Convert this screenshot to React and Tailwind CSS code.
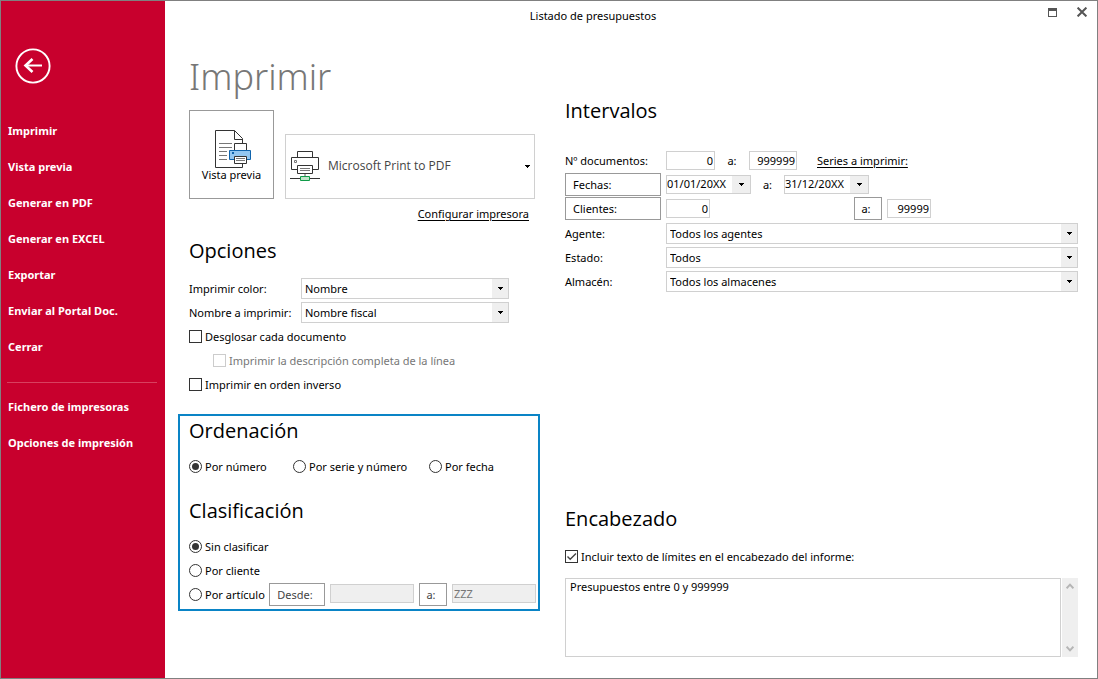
import { useState } from "react";

const menuItems = [
  "Imprimir",
  "Vista previa",
  "Generar en PDF",
  "Generar en EXCEL",
  "Exportar",
  "Enviar al Portal Doc.",
  "Cerrar",
];
const settingsItems = ["Fichero de impresoras", "Opciones de impresión"];

function Caret({ className = "" }) {
  return (
    <svg viewBox="0 0 5 3" className={`h-[3px] w-[5px] ${className}`} shapeRendering="crispEdges" fill="currentColor" aria-hidden="true">
      <path d="M0 0h5v1H4v1H3v1H2V2H1V1H0z" />
    </svg>
  );
}

function BackIcon() {
  return (
    <svg viewBox="0 0 36 36" className="size-9" fill="none" stroke="white" aria-hidden="true">
      <circle cx="18" cy="18" r="16.6" strokeWidth="1.9" />
      <path d="M10.5 17.5H27" strokeWidth="2" />
      <path d="M17.5 11l-7 6.5 7 6.5" strokeWidth="2.6" />
    </svg>
  );
}

function PreviewIcon() {
  return (
    <svg viewBox="0 0 37 38" className="h-[38px] w-[37px]" fill="none" stroke="#333" aria-hidden="true">
      <path d="M.5 .5H19.5L27.5 8.5V37.5H.5Z" fill="white" />
      <path d="M19.5 .5V9.5H27.5" />
      <path d="M4 13.5H17M4 17.5H17M4 21.5H12M4 25.5H12M4 29.5H12" stroke="#777" />
      <path d="M19.5 20.5V13.5H31.5V20.5" fill="white" />
      <path d="M14.5 20.5H35.5V29.5H14.5Z" fill="#92c7f2" stroke="#0f64ad" />
      <path d="M19.5 26.5H31.5V33.5H19.5Z" fill="white" />
      <path d="M21 28.5H30M21 30.5H30" stroke="#777" />
      <path d="M17 22h2v2h-2z" fill="#0f64ad" stroke="none" />
    </svg>
  );
}

function PrinterIcon({ className = "" }) {
  return (
    <svg viewBox="0 0 30 32" className={`h-8 w-[30px] ${className}`} fill="none" stroke="#333" aria-hidden="true">
      <path d="M7.5 7.5V1.5H22.5V7.5" />
      <path d="M7.5 19.5H1.5V7.5H28.5V19.5H22.5" />
      <path d="M4.5 10.5h2v2h-2z" stroke="#777" />
      <path d="M7.5 15.5H22.5V23.5H7.5Z" fill="white" />
      <path d="M10 18.5H20M10 20.5H20" stroke="#777" />
      <path d="M15 24V26" stroke="#aaa" strokeWidth="2" />
      <path d="M0 28.5H30" />
      <path d="M10.5 26.5H19.5V30.5H10.5Z" fill="#bfe3c8" stroke="#109b48" />
    </svg>
  );
}

function Heading({ children }) {
  return <h2 className="font-['Open_Sans','Noto_Sans',sans-serif] text-xl leading-[30px]">{children}</h2>;
}

function Select({ id, options, className = "" }) {
  return (
    <div className={`relative h-[21px] ${className}`}>
      <select id={id} className="block size-full appearance-none border border-[#d0d0d0] bg-white pr-5 pl-[3px] outline-none">
        {options.map((o) => (
          <option key={o}>{o}</option>
        ))}
      </select>
      <span className="pointer-events-none absolute inset-y-px right-px flex w-4 items-center justify-center bg-[#efefef]">
        <Caret />
      </span>
    </div>
  );
}

function DateField({ label, value }) {
  return (
    <div className="flex h-[19px] w-[85px] border border-[#d0d0d0]">
      <input aria-label={label} defaultValue={value} className="w-0 min-w-0 flex-1 pb-px outline-none" />
      <button type="button" aria-label={`Abrir calendario: ${label}`} className="flex w-[18px] items-center justify-center bg-[#efefef]">
        <Caret />
      </button>
    </div>
  );
}

function NumberField({ id, label, value, className }) {
  return (
    <input
      id={id}
      aria-label={label}
      defaultValue={value}
      inputMode="numeric"
      className={`h-[19px] border border-[#d0d0d0] bg-white pr-px pb-px text-right outline-none ${className}`}
    />
  );
}

function BoxButton({ children, className = "" }) {
  return (
    <button type="button" className={`h-[23px] border border-[#999] bg-white ${className}`}>
      {children}
    </button>
  );
}

function Check({ label, disabled, defaultChecked, className = "" }) {
  return (
    <label className={`flex h-6 items-center gap-[3px] pb-px ${disabled ? "text-[#777]" : ""} ${className}`}>
      <span className="relative size-[13px] shrink-0">
        <input
          type="checkbox"
          disabled={disabled}
          defaultChecked={defaultChecked}
          className="peer block size-full appearance-none border border-[#333] bg-white disabled:border-[#ccc]"
        />
        <svg viewBox="0 0 13 13" className="pointer-events-none absolute inset-0 hidden size-full peer-checked:block" fill="none" stroke="#444" strokeWidth="1.4" aria-hidden="true">
          <path d="M2.5 6.5l2.7 2.7L11 3.5" />
        </svg>
      </span>
      {label}
    </label>
  );
}

function Radio({ name, label, checked, onChange, className = "" }) {
  return (
    <label className={`flex h-6 items-center gap-[3px] pb-px whitespace-nowrap ${className}`}>
      <input
        type="radio"
        name={name}
        checked={checked}
        onChange={onChange}
        className="grid size-[13px] shrink-0 appearance-none place-content-center rounded-full border border-[#333] bg-white before:size-[7px] before:rounded-full before:content-[''] checked:before:bg-[#333]"
      />
      {label}
    </label>
  );
}

function Sidebar() {
  return (
    <nav className="w-[164px] shrink-0 bg-[#c8002d] text-[11px] font-bold text-white">
      <button type="button" aria-label="Volver" className="mt-[47px] ml-3.5 block size-9">
        <BackIcon />
      </button>
      <ul className="mt-[29px] pl-[7px]">
        {menuItems.map((item) => (
          <li key={item} className="flex h-9 items-center">
            <a href="#">{item}</a>
          </li>
        ))}
      </ul>
      <hr className="mt-[17px] mr-2 ml-1.5 border-t border-[#d8405f]" />
      <ul className="mt-1.5 pl-[7px]">
        {settingsItems.map((item) => (
          <li key={item} className="flex h-9 items-center">
            <a href="#">{item}</a>
          </li>
        ))}
      </ul>
    </nav>
  );
}

function TitleBar() {
  return (
    <header className="flex h-[30px] shrink-0">
      <h1 className="flex flex-1 items-center justify-center text-[11px]">Listado de presupuestos</h1>
      <div className="flex w-[76px] items-start gap-5 pt-[6px] pl-[27px] text-[#555]">
        <button type="button" aria-label="Maximizar" className="mt-px">
          <svg viewBox="0 0 9 9" className="size-[9px]" shapeRendering="crispEdges" fill="currentColor" aria-hidden="true">
            <path fillRule="evenodd" d="M0 0h9v9H0zM1 3v5h7V3z" />
          </svg>
        </button>
        <button type="button" aria-label="Cerrar ventana">
          <svg viewBox="0 0 10 10" className="size-[10px]" fill="none" stroke="currentColor" strokeWidth="2" aria-hidden="true">
            <path d="M.6 .6l8.8 8.8M9.4 .6L.6 9.4" />
          </svg>
        </button>
      </div>
    </header>
  );
}

function PrintColumn() {
  const [order, setOrder] = useState("Por número");
  const [group, setGroup] = useState("Sin clasificar");
  return (
    <div className="w-[362px] shrink-0">
      <div className="pl-[11px]">
        <h2 className="mt-[22px] font-['Noto_Sans','Open_Sans',sans-serif] text-4xl leading-[48px] font-light text-[#777]">Imprimir</h2>
        <div className="mt-[9px] flex items-end gap-[11px]">
          <button type="button" className="flex h-[89px] w-[85px] flex-col items-center border border-[#999] pt-[19px]">
            <span className="pl-1">
              <PreviewIcon />
            </span>
            <span className="leading-[14px]">Vista previa</span>
          </button>
          <div className="relative h-[65px] w-[250px]">
            <select aria-label="Impresora" className="block size-full appearance-none border border-[#d0d0d0] bg-white pb-0.5 pl-[42px] font-['Open_Sans','Noto_Sans',sans-serif] text-xs text-[#444] outline-none">
              <option>Microsoft Print to PDF</option>
            </select>
            <PrinterIcon className="pointer-events-none absolute top-4 left-[5px]" />
            <Caret className="pointer-events-none absolute top-[31px] right-[5px]" />
          </div>
        </div>
        <div className="flex h-[30px] items-center justify-end pr-[11px]">
          <a href="#" className="underline underline-offset-2">Configurar impresora</a>
        </div>

        <section className="mt-[7px]">
          <Heading>Opciones</Heading>
          <div className="mt-[11px] flex h-6 items-center pb-px">
            <label htmlFor="color" className="w-28">Imprimir color:</label>
            <Select id="color" options={["Nombre"]} className="w-52" />
          </div>
          <div className="flex h-6 items-center pb-px">
            <label htmlFor="nombre" className="w-28">Nombre a imprimir:</label>
            <Select id="nombre" options={["Nombre fiscal"]} className="w-52" />
          </div>
          <Check label="Desglosar cada documento" />
          <Check label="Imprimir la descripción completa de la línea" disabled className="pl-6" />
          <Check label="Imprimir en orden inverso" />
        </section>
      </div>

      <div className="mt-[17px] border-2 border-[#0a84c6] pr-0.5 pb-0.5 pl-[9px]">
        <section>
          <Heading>Ordenación</Heading>
          <div className="mt-[9px] grid grid-cols-[104px_136px_1fr]">
            {["Por número", "Por serie y número", "Por fecha"].map((o) => (
              <Radio key={o} name="orden" label={o} checked={order === o} onChange={() => setOrder(o)} />
            ))}
          </div>
        </section>
        <section className="mt-[17px]">
          <Heading>Clasificación</Heading>
          <div className="mt-[9px]">
            {["Sin clasificar", "Por cliente"].map((o) => (
              <Radio key={o} name="clasificacion" label={o} checked={group === o} onChange={() => setGroup(o)} />
            ))}
            <div className="flex h-6 items-start gap-[5px]">
              <Radio name="clasificacion" label="Por artículo" checked={group === "Por artículo"} onChange={() => setGroup("Por artículo")} className="w-[75px]" />
              <BoxButton className="w-14 pr-1 text-[#444]">Desde:</BoxButton>
              <input disabled aria-label="Desde artículo" className="mt-px h-[19px] w-[84px] border border-[#d0d0d0] bg-[#efefef]" />
              <BoxButton className="w-7 pr-1 text-[#444]">a:</BoxButton>
              <input disabled aria-label="Hasta artículo" defaultValue="ZZZ" className="mt-px h-[19px] w-[84px] border border-[#d0d0d0] bg-[#efefef] pb-px pl-px text-[#777]" />
            </div>
          </div>
        </section>
      </div>
    </div>
  );
}

function RangeColumn() {
  return (
    <div className="flex min-w-0 flex-1 flex-col">
      <section className="mt-[65px]">
        <Heading>Intervalos</Heading>
        <div className="mt-[23px] flex h-6 items-center pb-px">
          <label htmlFor="doc-desde" className="w-[101px]">Nº documentos:</label>
          <NumberField id="doc-desde" label="Nº documentos desde" value="0" className="w-[49px]" />
          <span className="w-[34px] text-center">a:</span>
          <NumberField label="Nº documentos hasta" value="999999" className="w-12" />
          <a href="#" className="ml-5 underline underline-offset-2">Series a imprimir:</a>
        </div>
        <div className="flex h-6 items-center pb-px">
          <BoxButton className="mr-[5px] w-24 pl-[7px] text-left">Fechas:</BoxButton>
          <DateField label="Fecha desde" value="01/01/20XX" />
          <span className="w-[33px] text-center">a:</span>
          <DateField label="Fecha hasta" value="31/12/20XX" />
        </div>
        <div className="flex h-6 items-center pb-px">
          <BoxButton className="mr-[5px] w-24 pl-[7px] text-left">Clientes:</BoxButton>
          <NumberField label="Cliente desde" value="0" className="w-11" />
          <BoxButton className="mr-[5px] ml-36 w-7 pr-1">a:</BoxButton>
          <NumberField label="Cliente hasta" value="99999" className="w-11" />
        </div>
        {[
          ["agente", "Agente:", "Todos los agentes"],
          ["estado", "Estado:", "Todos"],
          ["almacen", "Almacén:", "Todos los almacenes"],
        ].map(([id, label, value]) => (
          <div key={id} className="flex h-6 items-center pt-px">
            <label htmlFor={id} className="w-[101px]">{label}</label>
            <Select id={id} options={[value]} className="flex-1" />
          </div>
        ))}
      </section>

      <section className="mt-auto pb-[21px]">
        <Heading>Encabezado</Heading>
        <Check label="Incluir texto de límites en el encabezado del informe:" defaultChecked className="mt-[11px]" />
        <div className="mt-[9px] flex h-[79px] gap-px">
          <textarea
            aria-label="Texto del encabezado"
            defaultValue="Presupuestos entre 0 y 999999"
            className="min-w-0 flex-1 resize-none overflow-hidden border border-[#d0d0d0] bg-white px-1 leading-4 outline-none"
          />
          <div className="flex w-4 flex-col items-center justify-between bg-[#efefef] py-[5px] text-[#b5b5b5]">
            <button type="button" aria-label="Subir">
              <svg viewBox="0 0 8 6" className="h-1.5 w-2" fill="none" stroke="currentColor" strokeWidth="2" aria-hidden="true">
                <path d="M.6 5.2L4 1.6l3.4 3.6" />
              </svg>
            </button>
            <button type="button" aria-label="Bajar">
              <svg viewBox="0 0 8 6" className="h-1.5 w-2" fill="none" stroke="currentColor" strokeWidth="2" aria-hidden="true">
                <path d="M.6 .8L4 4.4 7.4 .8" />
              </svg>
            </button>
          </div>
        </div>
      </section>
    </div>
  );
}

export default function App() {
  return (
    <div className="flex min-h-screen border border-[#808080] bg-white font-['Noto_Sans','Open_Sans',sans-serif] text-[11px] leading-4 text-black">
      <Sidebar />
      <main className="flex min-w-0 flex-1 flex-col">
        <TitleBar />
        <div className="flex flex-1 gap-[25px] pr-[19px] pl-[13px]">
          <PrintColumn />
          <RangeColumn />
        </div>
      </main>
    </div>
  );
}
